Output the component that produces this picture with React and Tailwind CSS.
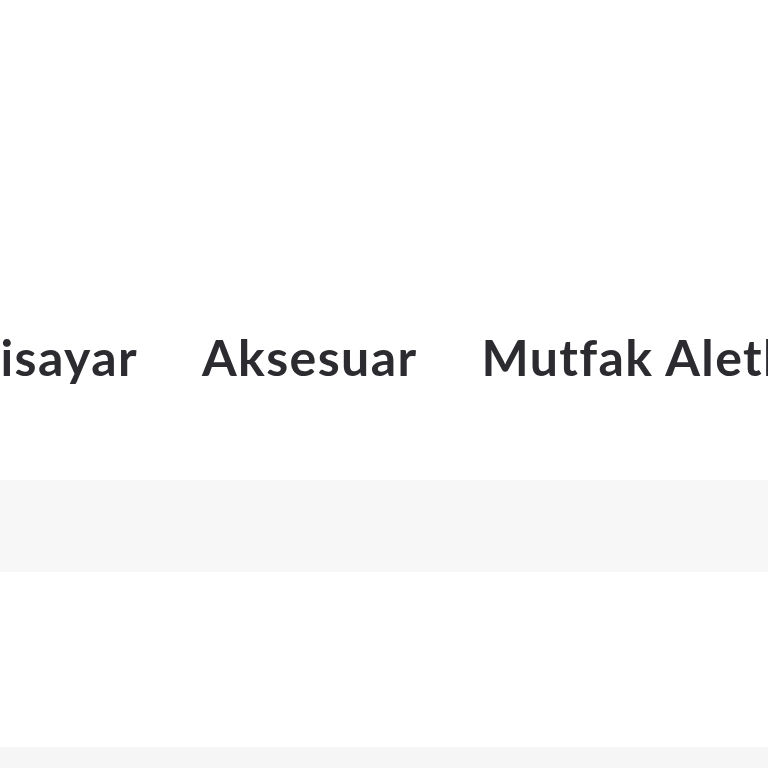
const categories = ['Aksesuar', 'Mutfak Aletleri', 'Ev Tekstili', 'Kozmetik'];

export default function App() {
  return (
    <div className="min-h-[768px] w-[768px] overflow-hidden bg-white" style={{ fontFamily: 'Lato, "Noto Sans", sans-serif' }}>
      <div className="h-[480px] flex flex-col justify-end">
        <nav className="flex items-center gap-[64px] whitespace-nowrap pb-[98px] text-[50px] font-bold leading-none tracking-[1.4px] text-[#2b2b30]">
          <div className="flex w-[138px] shrink-0 justify-end">
            <span>Bilgisayar</span>
          </div>
          {categories.map((c) => (
            <span key={c} className="shrink-0">{c}</span>
          ))}
        </nav>
      </div>
      <div className="h-[92px] bg-[#f7f7f7]" />
      <div className="h-[175px] bg-white" />
      <div className="h-[40px] bg-[#f6f6f6]" />
    </div>
  );
}
